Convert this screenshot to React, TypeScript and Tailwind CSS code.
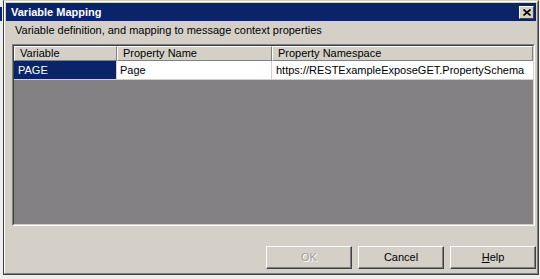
import React from "react";

// Classic Win2k-style "Variable Mapping" dialog
type Mapping = { variable: string; property: string; ns: string };

const rows: Mapping[] = [
  {
    variable: "PAGE",
    property: "Page",
    ns: "https://RESTExampleExposeGET.PropertySchema",
  },
];

function Btn({
  children,
  disabled,
}: {
  children: React.ReactNode;
  disabled?: boolean;
}) {
  return (
    <button
      className={
        "w-[86px] h-[23px] bg-[#d4d0c8] border border-t-white border-l-white border-r-[#404040] border-b-[#404040] shadow-[inset_-1px_-1px_0_#808080] text-[11px] " +
        (disabled ? "text-[#a09d97] [text-shadow:1px_1px_0_#fff]" : "text-black")
      }
    >
      {children}
    </button>
  );
}

export default function App() {
  return (
    <div
      className="w-[540px] h-[279px] bg-[#eeeeec] overflow-hidden relative"
      style={{ fontFamily: '"Liberation Sans", Arial, sans-serif' }}
    >
      {/* bit of the window behind */}
      <div className="absolute left-0 top-[7px] w-[2px] h-[14px] bg-[#0a246a]" />

      <div className="ml-[3px] w-[536px] h-[275px] border border-t-[#d4d0c8] border-l-[#404040] border-r-[#404040] border-b-[#404040]">
        <div className="w-full h-full border border-t-white border-l-white border-r-[#808080] border-b-[#808080] bg-[#d4d0c8] p-[1px] flex flex-col">
          {/* Title bar */}
          <div className="h-[18px] bg-[#0a246a] flex items-center justify-between pl-[5px] pr-[2px]">
            <span className="text-white font-bold text-[11px] leading-none">
              Variable Mapping
            </span>
            <div className="w-[15px] h-[13px] bg-[#d4d0c8] border border-t-white border-l-white border-r-[#404040] border-b-[#404040] flex items-center justify-center">
              <svg width="8" height="7" viewBox="0 0 8 7">
                <path
                  d="M0.5 0.5 L7.5 6.5 M7.5 0.5 L0.5 6.5"
                  stroke="#000"
                  strokeWidth="1.6"
                />
              </svg>
            </div>
          </div>

          {/* Description */}
          <div className="pl-[9px] pt-[2px] h-[23px] text-[11px] leading-[14px] text-black">
            Variable definition, and mapping to message context properties
          </div>

          {/* Grid */}
          <div className="ml-[6px] mr-[1px] h-[182px] border border-t-[#808080] border-l-[#808080] border-r-white border-b-white">
            <div className="w-full h-full border border-t-[#404040] border-l-[#404040] border-r-[#d4d0c8] border-b-[#d4d0c8] bg-[#838184] flex flex-col">
              <div className="flex h-[15px] text-[11px] leading-[13px] text-black">
                <div className="w-[103px] bg-[#d4d0c8] border-t border-l border-t-white border-l-white border-r border-r-[#808080] border-b border-b-[#808080] pl-[5px]">
                  Variable
                </div>
                <div className="w-[155px] bg-[#d4d0c8] border-t border-l border-t-white border-l-white border-r border-r-[#808080] border-b border-b-[#808080] pl-[5px]">
                  Property Name
                </div>
                <div className="flex-1 bg-[#d4d0c8] border-t border-l border-t-white border-l-white border-r border-r-[#808080] border-b border-b-[#808080] pl-[5px]">
                  Property Namespace
                </div>
              </div>
              {rows.map((r) => (
                <div
                  key={r.variable}
                  className="flex h-[19px] text-[11px] leading-[18px] border-b border-b-[#d4d0c8]"
                >
                  <div className="w-[103px] bg-[#0a246a] text-white pl-[4px] border-r border-r-[#d4d0c8]">
                    {r.variable}
                  </div>
                  <div className="w-[155px] bg-white text-black pl-[3px] border-r border-r-[#d4d0c8]">
                    {r.property}
                  </div>
                  <div className="flex-1 bg-white text-black pl-[4px]">
                    {r.ns}
                  </div>
                </div>
              ))}
            </div>
          </div>

          {/* Buttons */}
          <div className="flex justify-end gap-[6px] pt-[20px] pr-[0px]">
            <Btn disabled>OK</Btn>
            <Btn>Cancel</Btn>
            <Btn>
              <span className="underline">H</span>elp
            </Btn>
          </div>
        </div>
      </div>
    </div>
  );
}
